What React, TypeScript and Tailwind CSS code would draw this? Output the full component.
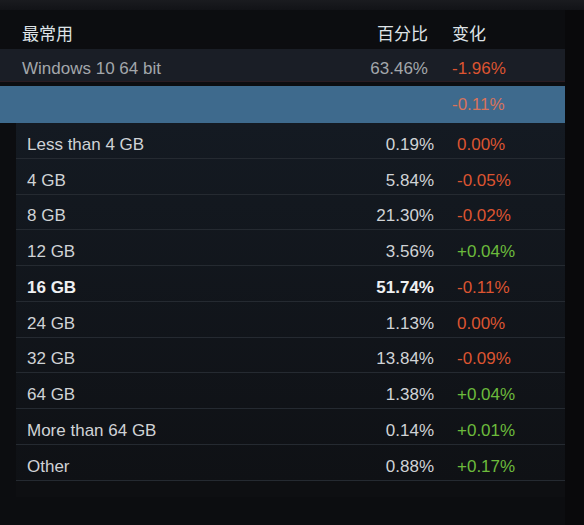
type Row = {
  label: string;
  pct: string;
  change: string;
  bold?: boolean;
};

const rows: Row[] = [
  { label: "Less than 4 GB", pct: "0.19%", change: "0.00%" },
  { label: "4 GB", pct: "5.84%", change: "-0.05%" },
  { label: "8 GB", pct: "21.30%", change: "-0.02%" },
  { label: "12 GB", pct: "3.56%", change: "+0.04%" },
  { label: "16 GB", pct: "51.74%", change: "-0.11%", bold: true },
  { label: "24 GB", pct: "1.13%", change: "0.00%" },
  { label: "32 GB", pct: "13.84%", change: "-0.09%" },
  { label: "64 GB", pct: "1.38%", change: "+0.04%" },
  { label: "More than 64 GB", pct: "0.14%", change: "+0.01%" },
  { label: "Other", pct: "0.88%", change: "+0.17%" },
];

// green for gains, red for drops and flat values
function ChangeText({ value }: { value: string }) {
  const up = value.startsWith("+");
  return (
    <span className={up ? "text-[#6cbb3c]" : "text-[#dc5431]"}>{value}</span>
  );
}

const cjk = { fontFamily: '"Noto Sans CJK SC", sans-serif' };

export default function App() {
  return (
    <div
      className="w-[584px] h-[525px] bg-[#0c0d10] flex flex-col overflow-hidden text-[17px] leading-none"
      style={{ fontFamily: '"Liberation Sans", Arial, "Noto Sans CJK SC", sans-serif' }}
    >
      <div className="h-[10px] shrink-0 bg-gradient-to-b from-[#1a1b1f] to-[#121317]" />
      <div className="flex flex-1">
        <div className="w-[565px] flex flex-col bg-[#0c0d10]">
          {/* header */}
          <div className="h-[39px] flex items-center pl-[22px] text-[#dfe3e7] pt-[6px]">
            <span className="flex-1" style={cjk}>
              最常用
            </span>
            <span className="text-right" style={cjk}>
              百分比
            </span>
            <span className="w-[137px] pl-[24px]" style={cjk}>
              变化
            </span>
          </div>

          {/* most common OS */}
          <div className="h-[33px] flex items-center pl-[22px] pt-[7px] bg-[#1a1e26] border-b border-[#2a1c22] text-[#a3a7ab]">
            <span className="flex-1">Windows 10 64 bit</span>
            <span className="text-right">63.46%</span>
            <span className="w-[137px] pl-[24px]">
              <ChangeText value="-1.96%" />
            </span>
          </div>
          <div className="h-[4px]" />

          {/* selected category bar */}
          <div className="h-[37px] flex items-center justify-end bg-[#3e6a8d]">
            <span className="w-[137px] pl-[24px] text-[#d8735b]">-0.11%</span>
          </div>

          {/* RAM breakdown */}
          <div className="ml-[16px] flex flex-col bg-gradient-to-b from-[#141a22] to-[#0f1115]">
            {rows.map((r) => (
              <div
                key={r.label}
                className={`h-[35.75px] flex items-center pl-[11px] pt-[8px] border-b border-[#252a31] ${
                  r.bold ? "font-bold text-[#eef0f2]" : "text-[#d0d3d6]"
                }`}
              >
                <span className="flex-1">{r.label}</span>
                <span className="text-right">{r.pct}</span>
                <span className="w-[131px] pl-[23px] font-normal">
                  <ChangeText value={r.change} />
                </span>
              </div>
            ))}
          </div>
          <div className="h-[16px] ml-[16px] bg-[#0e0f12]" />
        </div>
        <div className="flex-1 bg-[#09090b]" />
      </div>
    </div>
  );
}
